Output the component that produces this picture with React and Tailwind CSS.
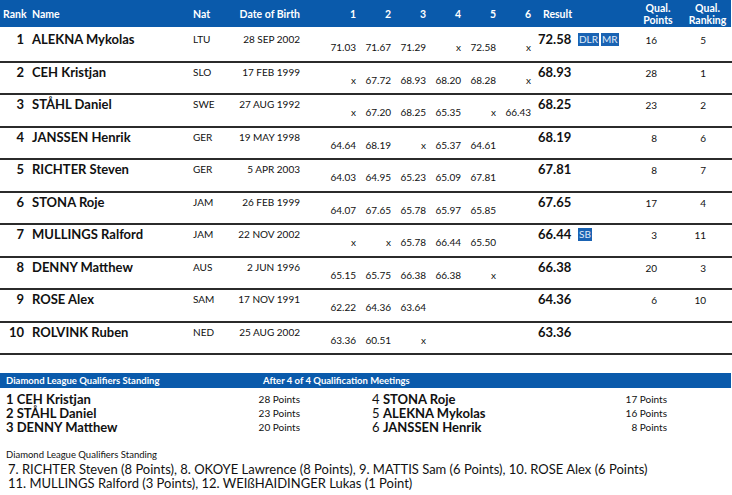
const ROWS = [
  { rank: 1, name: "ALEKNA Mykolas", nat: "LTU", dob: "28 SEP 2002", att: ["71.03", "71.67", "71.29", "x", "72.58", "x"], result: "72.58", badges: ["DLR", "MR"], pts: "16", rk: "5" },
  { rank: 2, name: "CEH Kristjan", nat: "SLO", dob: "17 FEB 1999", att: ["x", "67.72", "68.93", "68.20", "68.28", "x"], result: "68.93", badges: [], pts: "28", rk: "1" },
  { rank: 3, name: "STÅHL Daniel", nat: "SWE", dob: "27 AUG 1992", att: ["x", "67.20", "68.25", "65.35", "x", "66.43"], result: "68.25", badges: [], pts: "23", rk: "2" },
  { rank: 4, name: "JANSSEN Henrik", nat: "GER", dob: "19 MAY 1998", att: ["64.64", "68.19", "x", "65.37", "64.61", ""], result: "68.19", badges: [], pts: "8", rk: "6" },
  { rank: 5, name: "RICHTER Steven", nat: "GER", dob: "5 APR 2003", att: ["64.03", "64.95", "65.23", "65.09", "67.81", ""], result: "67.81", badges: [], pts: "8", rk: "7" },
  { rank: 6, name: "STONA Roje", nat: "JAM", dob: "26 FEB 1999", att: ["64.07", "67.65", "65.78", "65.97", "65.85", ""], result: "67.65", badges: [], pts: "17", rk: "4" },
  { rank: 7, name: "MULLINGS Ralford", nat: "JAM", dob: "22 NOV 2002", att: ["x", "x", "65.78", "66.44", "65.50", ""], result: "66.44", badges: ["SB"], pts: "3", rk: "11" },
  { rank: 8, name: "DENNY Matthew", nat: "AUS", dob: "2 JUN 1996", att: ["65.15", "65.75", "66.38", "66.38", "x", ""], result: "66.38", badges: [], pts: "20", rk: "3" },
  { rank: 9, name: "ROSE Alex", nat: "SAM", dob: "17 NOV 1991", att: ["62.22", "64.36", "63.64", "", "", ""], result: "64.36", badges: [], pts: "6", rk: "10" },
  { rank: 10, name: "ROLVINK Ruben", nat: "NED", dob: "25 AUG 2002", att: ["63.36", "60.51", "x", "", "", ""], result: "63.36", badges: [], pts: "", rk: "" },
];

// left block has bold rank numbers, right block regular ones
const LEFT = [
  ["1", "CEH Kristjan", "28 Points"],
  ["2", "STÅHL Daniel", "23 Points"],
  ["3", "DENNY Matthew", "20 Points"],
];

const RIGHT = [
  ["4", "STONA Roje", "17 Points"],
  ["5", "ALEKNA Mykolas", "16 Points"],
  ["6", "JANSSEN Henrik", "8 Points"],
];

function Badge({ children }) {
  return (
    <span className="bg-[#1a63b3] px-[1px] text-[10px] leading-[13px] text-[#e0ecf9]">
      {children}
    </span>
  );
}

function Row({ r }) {
  return (
    <div className="flex h-[32.5px] border-b-2 border-[#2b2b2b]">
      <div className="w-[24px] pt-[1px] text-right text-[13px] font-bold leading-[16px]">{r.rank}</div>
      <div className="ml-[8px] w-[161px] pt-[1px] text-[13px] font-bold leading-[16px]">{r.name}</div>
      <div className="w-[40px] pt-[3px] text-[10px] leading-[12px]">{r.nat}</div>
      <div className="w-[67px] pt-[3px] text-right text-[10px] leading-[12px]">{r.dob}</div>
      <div className="ml-[21px] flex pt-[11px]">
        {r.att.map((a, i) => (
          <div key={i} className="w-[35px] text-right text-[10px] leading-[12px]">
            {a}
          </div>
        ))}
      </div>
      <div className="flex w-[99px] pl-[7px] pt-[1px]">
        <div className="w-[40px] text-[13px] font-bold leading-[16px]">{r.result}</div>
        <div className="mt-[2px] flex h-[13px] gap-[2px]">
          {r.badges.map((b) => (
            <Badge key={b}>{b}</Badge>
          ))}
        </div>
      </div>
      <div className="w-[56px] pr-[29px] pt-[4px] text-right text-[10px] leading-[12px]">{r.pts}</div>
      <div className="w-[46px] pr-[26px] pt-[4px] text-right text-[10px] leading-[12px]">{r.rk}</div>
    </div>
  );
}

function Standing({ items, boldRank, pad }) {
  return (
    <div className={pad}>
      {items.map(([n, name, pts]) => (
        <div key={n} className="flex h-[14px] items-center justify-between">
          <div className="text-[13px] leading-[14px]">
            <span className={boldRank ? "font-bold" : ""}>{n} </span>
            <span className="font-bold">{name}</span>
          </div>
          <div className="text-[10px] leading-[12px]">{pts}</div>
        </div>
      ))}
    </div>
  );
}

export default function App() {
  return (
    <div className="w-[732px] bg-white font-['Lato',sans-serif] text-[#111]">
      <div className="flex h-[27px] w-[731px] items-center bg-[#0a5aab] text-[10.5px] font-bold leading-[12px] text-white">
        <div className="w-[32px] pl-[3px]">Rank</div>
        <div className="w-[161px]">Name</div>
        <div className="w-[40px]">Nat</div>
        <div className="w-[67px] text-right">Date of Birth</div>
        <div className="ml-[21px] flex">
          {[1, 2, 3, 4, 5, 6].map((n) => (
            <div key={n} className="w-[35px] text-right">
              {n}
            </div>
          ))}
        </div>
        <div className="w-[99px] pl-[12px]">Result</div>
        <div className="w-[56px] pt-[1px] text-center">
          Qual.
          <br />
          Points
        </div>
        <div className="w-[45px] pr-[2px] pt-[1px] text-center">
          Qual.
          <br />
          Ranking
        </div>
      </div>
      <div className="h-[3px]" />
      {ROWS.map((r) => (
        <Row key={r.rank} r={r} />
      ))}

      <div className="mt-[18px] flex h-[15px] w-[731px] items-center bg-[#0a5aab] text-[9.5px] font-bold leading-[12px] text-white">
        <div className="w-[263px] pl-[6px]">Diamond League Qualifiers Standing</div>
        <div>After 4 of 4 Qualification Meetings</div>
      </div>
      <div className="flex pt-[4px]">
        <Standing items={LEFT} boldRank pad="w-[300px] pl-[6px]" />
        <Standing items={RIGHT} pad="ml-[72px] w-[295px]" />
      </div>

      <div className="mt-[15px] pl-[6px] text-[9.5px] leading-[12px]">Diamond League Qualifiers Standing</div>
      <div className="mt-[1px] pb-[8px] pl-[8px] text-[13px] leading-[14px]">
        <div>7. RICHTER Steven (8 Points), 8. OKOYE Lawrence (8 Points), 9. MATTIS Sam (6 Points), 10. ROSE Alex (6 Points)</div>
        <div>11. MULLINGS Ralford (3 Points), 12. WEIßHAIDINGER Lukas (1 Point)</div>
      </div>
    </div>
  );
}
